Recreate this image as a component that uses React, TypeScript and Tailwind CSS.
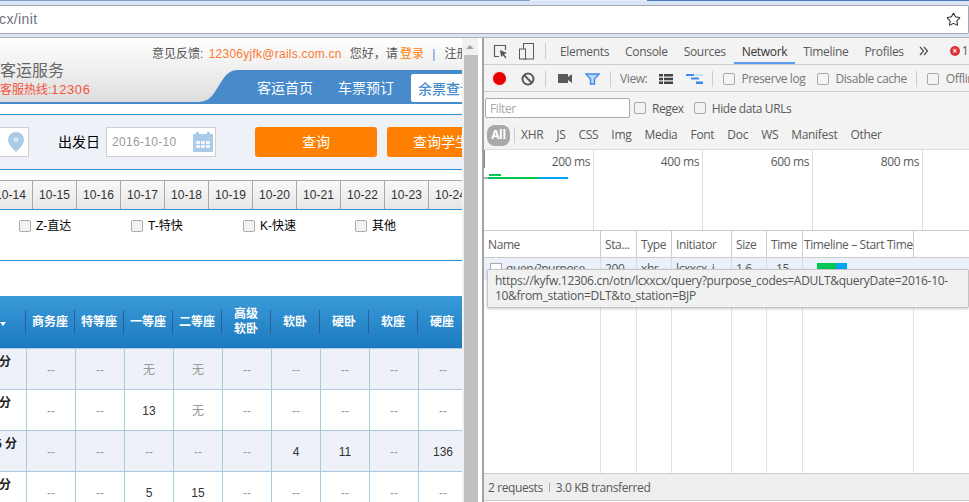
import { Star } from 'lucide-react'

const cjk = { fontFamily: '"Liberation Sans", "Noto Sans CJK SC", sans-serif' }
const dev = { fontFamily: '"Open Sans", "Noto Sans", sans-serif' }

const dates = ['10-14', '10-15', '10-16', '10-17', '10-18', '10-19', '10-20', '10-21', '10-22', '10-23', '10-24']
const trainTypes = ['Z-直达', 'T-特快', 'K-快速', '其他']
const seatHeads = ['商务座', '特等座', '一等座', '二等座', '高级\n软卧', '软卧', '硬卧', '软座', '硬座']
const rows = [
  { first: '分', cells: ['--', '--', '无', '无', '--', '--', '--', '--', '--'] },
  { first: '分', cells: ['--', '--', '13', '无', '--', '--', '--', '--', '--'] },
  { first: '5 分', cells: ['--', '--', '--', '--', '--', '4', '11', '--', '136'] },
  { first: '分', cells: ['--', '--', '5', '15', '--', '--', '--', '--', '--'] },
]

function Check({ className = '' }: { className?: string }) {
  return <span className={`inline-block w-[12px] h-[12px] shrink-0 rounded-[2px] border border-[#a9a9a9] bg-[#f3f3f3] ${className}`} />
}

function LeftPage() {
  return (
    <div className="w-[462px] shrink-0 overflow-hidden bg-white" style={cjk}>
      {/* 顶部 */}
      <div className="h-[66px] border-b-2 border-[#478bcb] bg-gradient-to-b from-white to-[#dedede] flex">
        <div className="w-[196px] shrink-0 pt-[23px]">
          <div className="text-[16px] leading-[20px] text-[#666]">客运服务</div>
          <div className="text-[12px] leading-[18px] text-[#f5533d] whitespace-nowrap">客服热线:<span className="text-[13px] tracking-[0.6px]">12306</span></div>
        </div>
        <div className="flex-1 min-w-0 flex flex-col">
          <div className="h-[32px] pt-[8px] -ml-[44px] text-[12px] leading-[16px] text-[#555] whitespace-nowrap">
            意见反馈: <span className="ml-[2px] text-[#fb7a2c] tracking-[0.25px]">12306yjfk@rails.com.cn</span>
            <span className="ml-[8px]">您好，请</span> <span className="-ml-[1px] text-[#ff7f00]">登录</span>
            <span className="ml-[8px] text-[#478bcb]">|</span> <span className="ml-[6px]">注册</span>
          </div>
          <div className="h-[32px] flex items-stretch relative">
            <svg width="42" height="32" viewBox="0 0 42 32" className="shrink-0">
              <path d="M0 32 C14 32 16 26 22 17 C28 7 32 0 42 0 L42 32 Z" fill="#478bcb" />
            </svg>
            <div className="flex-1 bg-[#478bcb] flex items-end text-[14px] text-white whitespace-nowrap overflow-hidden">
              <span className="ml-[19px] mb-[4px] leading-[20px]">客运首页</span>
              <span className="ml-[25px] mb-[4px] leading-[20px]">车票预订</span>
              <span className="ml-[17px] h-[28px] w-[60px] pl-[7px] rounded-l-[2px] bg-white text-[#478bcb] font-medium leading-[30px]">余票查询</span>
            </div>
          </div>
        </div>
      </div>

      {/* 查询条件 */}
      <div className="mt-[10px] h-[56px] border-y border-[#2f8fd3] bg-[#eef1f8] flex items-center text-[14px]">
        <div className="w-[29px] h-[30px] shrink-0 bg-white border border-[#cfcfcf] border-l-0 flex items-center justify-end pr-[4px]">
          <svg width="16" height="20" viewBox="0 0 16 20">
            <path d="M8 0a8 8 0 0 1 8 8c0 5-8 12-8 12S0 13 0 8a8 8 0 0 1 8-8z" fill="#a9cbe8" />
            <circle cx="8" cy="7.5" r="2.5" fill="#d5e5f3" />
          </svg>
        </div>
        <span className="ml-[29px] shrink-0 whitespace-nowrap text-black">出发日</span>
        <div className="ml-[6px] w-[110px] h-[30px] shrink-0 bg-white border border-[#cfcfcf] flex items-center justify-between pl-[5px] pr-[2px] text-[12px] text-[#999] tracking-[0.3px]">
          2016-10-10
          <svg width="20" height="20" viewBox="0 0 20 20">
            <rect x="0" y="2" width="20" height="18" fill="#a9cbe8" />
            <rect x="3" y="0" width="3" height="4" fill="#a9cbe8" />
            <rect x="14" y="0" width="3" height="4" fill="#a9cbe8" />
            <path d="M3 9h4v3H3zM8 9h4v3H8zM13 9h4v3h-4zM3 13h4v3H3zM8 13h4v3H8zM13 13h4v3h-4z" fill="#eef4fa" />
          </svg>
        </div>
        <button className="ml-[39px] w-[122px] h-[30px] shrink-0 rounded-[3px] bg-[#ff8000] text-white">查询</button>
        <button className="ml-[10px] w-[122px] h-[30px] shrink-0 rounded-[3px] bg-[#ff8000] text-white text-left pl-[26px] whitespace-nowrap">查询学生</button>
      </div>

      {/* 日期 */}
      <div className="mt-[10px] h-[30px] border-b border-[#2f8fd3] flex -ml-[11px]">
        {dates.map((d) => (
          <div key={d} className="w-[44px] shrink-0 pt-[1px] border-t border-r border-[#a8a8a8] bg-gradient-to-b from-[#f8f8f8] to-[#e6e6e6] text-center text-[12px] leading-[27px] tracking-[0.1px] text-[#333]">
            {d}
          </div>
        ))}
      </div>

      {/* 车次类型 */}
      <div className="h-[50px] pl-[19px] pt-[8px] flex items-start text-[12px] leading-[16px] text-black">
        {trainTypes.map((t) => (
          <label key={t} className="w-[112px] shrink-0 flex items-center gap-[5px]">
            <Check />
            {t}
          </label>
        ))}
      </div>

      <div className="h-[36px] border-t border-[#2f8fd3]" />

      {/* 列表 */}
      <div className="h-[53px] border-b border-[#a9cbdd] bg-gradient-to-b from-[#3a9ad9] to-[#1b7abf] grid grid-cols-[25px_repeat(9,49px)] items-center text-white text-[12px] font-bold leading-[15px]">
        <div className="text-left">
          <span className="inline-block w-0 h-0 border-x-[3px] border-x-transparent border-t-[4px] border-t-white" />
        </div>
        {seatHeads.map((h) => (
          <div key={h} className="h-[24px] border-l border-[#2a5f9e] flex items-center justify-center text-center whitespace-pre-line">
            {h}
          </div>
        ))}
      </div>
      {rows.map((r, i) => (
        <div key={i} className={`h-[41px] border-b border-[#a9cbdd] grid grid-cols-[26px_repeat(9,49px)] text-[12px] ${i % 2 === 0 ? 'bg-[#eef1f8]' : 'bg-white'}`}>
          <div className="pt-[5px] leading-[16px] font-bold text-[#222] whitespace-nowrap overflow-hidden">
            <span className={r.first.length > 1 ? '-ml-[5px]' : '-ml-[1px]'}>{r.first}</span>
          </div>
          {r.cells.map((c, j) => (
            <div key={j} className={`border-l border-[#a9cbdd] flex items-center justify-center pt-[1px] ${c === '--' || c === '无' ? 'text-[#999]' : 'text-[#333]'}`}>
              {c}
            </div>
          ))}
        </div>
      ))}
    </div>
  )
}

function Sep({ className = '' }: { className?: string }) {
  return <span className={`w-px h-[16px] bg-[#ccc] shrink-0 ${className}`} />
}

function DevTools() {
  const tabs = ['Elements', 'Console', 'Sources', 'Network', 'Timeline', 'Profiles']
  const types = ['XHR', 'JS', 'CSS', 'Img', 'Media', 'Font', 'Doc', 'WS', 'Manifest', 'Other']
  const cols = [
    { w: 'w-[117px]', t: 'Name' },
    { w: 'w-[36px]', t: 'Sta...' },
    { w: 'w-[35px]', t: 'Type' },
    { w: 'w-[60px]', t: 'Initiator' },
    { w: 'w-[35px]', t: 'Size' },
    { w: 'w-[36px]', t: 'Time' },
    { w: 'w-[111px]', t: 'Timeline – Start Time' },
  ]
  return (
    <div className="relative flex-1 min-w-0 border-l-2 border-[#a3a3a3] overflow-hidden bg-white flex flex-col text-[12px] tracking-[-0.4px] text-[#5a5a5a]" style={dev}>
      {/* 标签栏 */}
      <div className="h-[27px] shrink-0 bg-[#f3f3f3] border-b border-[#ccc] flex items-stretch tracking-[-0.32px] whitespace-nowrap">
        <div className="w-[61px] shrink-0 flex items-center pl-[9px] gap-[11px]">
          <svg width="15" height="15" viewBox="0 0 15 15" className="shrink-0">
            <path d="M6 12.5H1.5v-11h11V6" fill="none" stroke="#5a5a5a" strokeWidth="1.2" />
            <path d="M7 6l7 3-3 1.2 2.5 3-1.2 1-2.5-3L8 13z" fill="#5a5a5a" />
          </svg>
          <svg width="15" height="17" viewBox="0 0 15 17" className="shrink-0">
            <rect x="4.5" y="0.5" width="10" height="15.5" fill="none" stroke="#5a5a5a" />
            <rect x="0.5" y="6" width="6" height="10" fill="#f3f3f3" stroke="#5a5a5a" />
          </svg>
        </div>
        <Sep className="self-center" />
        <div className="flex ml-[6px] flex-1">
          {tabs.map((t) => (
            <span key={t} className={`px-[8px] leading-[27px] h-[26px] border-b-2 ${t === 'Network' ? 'border-[#5c9bf0] text-[#333]' : 'border-transparent'}`}>
              {t}
            </span>
          ))}
          <svg width="10" height="10" viewBox="0 0 10 10" className="self-center ml-[7px]">
            <path d="M1 1l3.5 4L1 9M5 1l3.5 4L5 9" fill="none" stroke="#555" strokeWidth="1.3" />
          </svg>
          <span className="ml-[21px] self-center w-[10px] h-[10px] rounded-full bg-[#e0313a] flex items-center justify-center text-white text-[8px] leading-none font-bold">×</span>
          <span className="ml-[2px] self-center">1</span>
        </div>
      </div>

      {/* 工具栏 */}
      <div className="h-[27px] shrink-0 bg-[#f3f3f3] border-b border-[#ccc] flex items-center pt-[1px] whitespace-nowrap">
        <span className="ml-[9px] w-[13px] h-[13px] rounded-full bg-[#e60000] shadow-[0_0_2px_#ff9a9a] shrink-0" />
        <svg width="14" height="14" viewBox="0 0 14 14" className="ml-[15px] shrink-0">
          <circle cx="7" cy="7" r="5.5" fill="none" stroke="#5a5a5a" strokeWidth="2" />
          <path d="M3 3l8 8" stroke="#5a5a5a" strokeWidth="2" />
        </svg>
        <Sep className="ml-[10px]" />
        <svg width="14" height="9" viewBox="0 0 14 9" className="ml-[12px] shrink-0">
          <path d="M0 0h10v3l4-3v9l-4-3v3H0z" fill="#5a5a5a" />
        </svg>
        <svg width="15" height="12" viewBox="0 0 15 12" className="ml-[13px] shrink-0">
          <path d="M1 1h13L9.5 6v5h-4V6z" fill="#bcd9f8" stroke="#3e8cea" strokeWidth="1.4" />
        </svg>
        <Sep className="ml-[10px]" />
        <span className="ml-[9px] text-[#777]">View:</span>
        <svg width="14" height="10" viewBox="0 0 14 10" className="ml-[12px] shrink-0">
          <path d="M0 0h4v2.5H0zM5 0h9v2.5H5zM0 3.7h4v2.5H0zM5 3.7h9v2.5H5zM0 7.5h4V10H0zM5 7.5h9V10H5z" fill="#444" />
        </svg>
        <svg width="17" height="10" viewBox="0 0 17 10" className="ml-[13px] shrink-0">
          <path d="M0 0h8v2H0zM5 3.5h8v2H5zM10 7.5h7V10h-7z" fill="#3e8cea" />
          <path d="M9 0h8v2H9z" fill="#c9def7" />
        </svg>
        <Sep className="ml-[9px]" />
        <Check className="ml-[10px]" />
        <span className="ml-[6px] text-[#777]">Preserve log</span>
        <Check className="ml-[12px]" />
        <span className="ml-[6px] text-[#777]">Disable cache</span>
        <Sep className="ml-[9px]" />
        <Check className="ml-[10px]" />
        <span className="ml-[7px] text-[#777]">Offline</span>
      </div>

      {/* 过滤栏 */}
      <div className="h-[27px] pt-[5px] shrink-0 bg-[#f3f3f3] flex items-center whitespace-nowrap">
        <div className="ml-[1px] w-[145px] h-[20px] bg-white border border-[#aaa] rounded-[2px] pl-[4px] leading-[20px] text-[#aaa] shrink-0">Filter</div>
        <Check className="ml-[4px]" />
        <span className="ml-[6px] pt-[1px]">Regex</span>
        <Check className="ml-[10px]" />
        <span className="ml-[6px] pt-[1px]">Hide data URLs</span>
      </div>
      <div className="h-[31px] shrink-0 pt-[2px] bg-[#f3f3f3] border-b border-[#ddd] flex items-center tracking-[-0.3px] whitespace-nowrap">
        <span className="ml-[3px] w-[23px] h-[21px] rounded-[8px] bg-[#a9a9a9] text-white text-center leading-[20px] font-bold shrink-0">All</span>
        <Sep className="ml-[4px]" />
        {types.map((t) => (
          <span key={t} className="ml-[6px] mr-[7px] first:ml-[6px]">{t}</span>
        ))}
      </div>

      {/* 概览 */}
      <div className="h-[81px] shrink-0 border-b border-[#ccc] flex relative">
        {[110, 109, 110, 110].map((w, i) => (
          <div key={i} className="shrink-0 h-full border-r border-[#ddd] pt-[3px] pr-[3px] text-right" style={{ width: w }}>
            {['200 ms', '400 ms', '600 ms', '800 ms'][i]}
          </div>
        ))}
        <span className="absolute left-0 top-0 w-[1px] h-[18px] bg-[#888]" />
        <span className="absolute left-[5px] top-[24px] w-[12px] h-[2px] bg-[#00c853]" />
        <span className="absolute left-0 top-[27px] w-[4px] h-[2px] bg-[#aaa]" />
        <span className="absolute left-[4px] top-[27px] w-[51px] h-[2px] bg-[#00c853]" />
        <span className="absolute left-[55px] top-[27px] w-[29px] h-[2px] bg-[#00a6f5]" />
      </div>

      {/* 请求表 */}
      <div className="h-[27px] shrink-0 border-b border-[#ccc] flex leading-[27px] whitespace-nowrap">
        {cols.map((c) => (
          <div key={c.t} className={`${c.w} shrink-0 border-r border-[#ccc] pl-[4px] overflow-hidden last:pl-[1px]`}>{c.t}</div>
        ))}
      </div>
      <div className="flex-1 min-h-0 flex relative">
        {cols.map((c) => (
          <div key={c.t} className={`${c.w} shrink-0 border-r border-[#e3e3e3]`} />
        ))}
        <div className="absolute left-0 right-0 top-0 h-[22px] bg-[#eaf1fb] flex leading-[22px] whitespace-nowrap text-[#555]">
          <div className="w-[117px] shrink-0 pl-[6px] flex items-center gap-[4px] border-r border-[#ddd]">
            <span className="w-[12px] h-[12px] bg-white border border-[#aaa] shrink-0" />
            query?purpose
          </div>
          <div className="w-[36px] shrink-0 pl-[4px] border-r border-[#ddd]">200</div>
          <div className="w-[35px] shrink-0 pl-[4px] border-r border-[#ddd]">xhr</div>
          <div className="w-[60px] shrink-0 pl-[4px] border-r border-[#ddd]">lcxxcx_i</div>
          <div className="w-[35px] shrink-0 pl-[4px] border-r border-[#ddd]">1.6</div>
          <div className="w-[36px] shrink-0 pl-[9px] border-r border-[#ddd]">15</div>
          <div className="w-[111px] shrink-0 pt-[5px] pl-[14px] flex items-start">
            <span className="w-[19px] h-[10px] bg-[#00c853]" />
            <span className="w-[11px] h-[10px] bg-[#00a6f5]" />
          </div>
        </div>
        {/* 悬浮提示 */}
        <div className="absolute left-[3px] right-0 top-[11px] h-[39px] bg-[#f1f1f1] border border-[#c4c4c4] rounded-[2px] shadow-[0_1px_3px_rgba(0,0,0,0.2)] px-[7px] py-[3px] text-[12px] leading-[15px] tracking-[-0.3px] whitespace-nowrap text-[#555]">
          https://kyfw.12306.cn/otn/lcxxcx/query?purpose_codes=ADULT&amp;queryDate=2016-10-
          <br />
          10&amp;from_station=DLT&amp;to_station=BJP
        </div>
      </div>

      {/* 状态栏 */}
      <div className="h-[28px] mb-[1px] pt-[1px] shrink-0 bg-[#eeeeee] border-y border-[#ccc] flex items-center pl-[4px] whitespace-nowrap">
        2 requests
        <span className="mx-[6px] w-px h-[9px] bg-[#aaa]" />
        3.0 KB transferred
      </div>
    </div>
  )
}

export default function App() {
  return (
    <div className="w-[969px] h-[502px] overflow-hidden bg-[#dae6f8] flex flex-col">
      {/* 地址栏 */}
      <div className="h-[1px] shrink-0 flex">
        <span className="w-[530px] bg-[#7f9fcf]" />
        <span className="w-[117px] bg-[#e6effb]" />
        <span className="flex-1 bg-[#4a78b8]" />
      </div>
      <div className="mt-[4px] h-[29px] shrink-0 bg-white border-y border-r border-[#a6a9b0] rounded-r-[2px] flex items-center justify-between pr-[7px]">
        <span className="text-[#6d7079] text-[14px] -ml-[1px] tracking-[0.4px]" style={{ fontFamily: '"Liberation Sans", sans-serif' }}>cx/init</span>
        <Star size={15} strokeWidth={1.7} className="text-[#333]" />
      </div>
      <div className="mt-[3px] flex-1 min-h-0 flex border-t border-[#b4b4b4] bg-white">
        <LeftPage />
        {/* 滚动条 */}
        <div className="w-[16px] shrink-0 bg-[#f1f1f1] flex flex-col items-center">
          <div className="h-[17px] pt-[7px] shrink-0">
            <span className="block w-0 h-0 border-x-[4px] border-x-transparent border-b-[4px] border-b-[#a3a3a3]" />
          </div>
          <div className="flex-1 w-[14px] ml-[1px] bg-[#c0c0c0]" />
        </div>
        <div className="w-[4px] shrink-0 bg-white" />
        <DevTools />
      </div>
    </div>
  )
}
